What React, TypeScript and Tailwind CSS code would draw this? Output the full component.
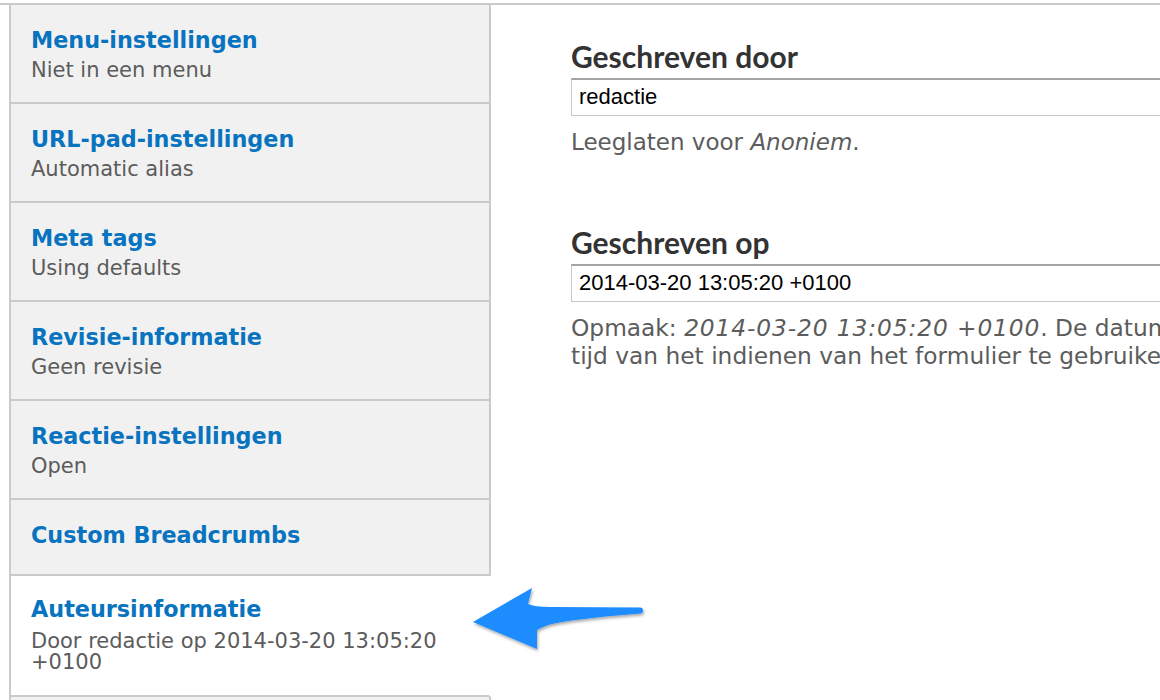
const lucida = "font-['DejaVu_Sans',sans-serif]";

type Tab = { title: string; summary?: string; active?: boolean };

const tabs: Tab[] = [
  { title: "Menu-instellingen", summary: "Niet in een menu" },
  { title: "URL-pad-instellingen", summary: "Automatic alias" },
  { title: "Meta tags", summary: "Using defaults" },
  { title: "Revisie-informatie", summary: "Geen revisie" },
  { title: "Reactie-instellingen", summary: "Open" },
  { title: "Custom Breadcrumbs" },
  { title: "Auteursinformatie", summary: "Door redactie op 2014-03-20 13:05:20 +0100", active: true },
];

function TabItem({ tab }: { tab: Tab }) {
  return (
    <li
      className={
        "border-b-2 border-l-2 border-[#cacaca] px-[20px] " +
        (tab.active
          ? "bg-white pt-[18px] pb-[22px] border-r-2 border-r-white"
          : "bg-[#f1f1f1] pt-[20px] border-r-2 " + (tab.summary ? "h-[99px]" : "h-[76px]"))
      }
    >
      <a className={`${lucida} block text-[22.3px] leading-[30px] font-bold text-[#0873bf]`}>{tab.title}</a>
      {tab.summary && (
        <div
          className={`${lucida} text-[21px] leading-[21px] text-[#5c5c5c] pr-[10px] ${tab.active ? "mt-[7px]" : "mt-[5px]"}`}
        >
          {tab.summary}
        </div>
      )}
    </li>
  );
}

export default function App() {
  return (
    <div className="relative h-[700px] w-[1160px] overflow-hidden bg-white pt-[3px]">
      <div className="flex border-t-2 border-[#cacaca] pl-[9px]">
        {/* verticale tabs */}
        <ul className="w-[482px] shrink-0">
          {tabs.map((t) => (
            <TabItem key={t.title} tab={t} />
          ))}
          <li className="h-[40px] border-l-2 border-r-2 border-[#cacaca] bg-[#f1f1f1]" />
        </ul>

        {/* inhoud */}
        <div className="min-w-0 flex-1 pl-[80px] pt-[34px]">
          <div>
            <label className="block font-['Lato',sans-serif] text-[30px] leading-[34px] font-bold text-[#333]">
              Geschreven door
            </label>
            <div className="mt-[5px] h-[38px] w-[700px] border border-[#c8c8c8] border-t-2 border-t-[#a3a3a3] pl-[7px] font-['Liberation_Sans',sans-serif] text-[22px] leading-[34px] text-black">
              redactie
            </div>
            <p className={`${lucida} mt-[12px] text-[23px] leading-[28px] text-[#5c5c5c]`}>
              Leeglaten voor <em>Anoniem</em>.
            </p>
          </div>

          <div className="mt-[69px]">
            <label className="block font-['Lato',sans-serif] text-[30px] leading-[34px] font-bold text-[#333]">
              Geschreven op
            </label>
            <div className="mt-[5px] h-[38px] w-[700px] border border-[#c8c8c8] border-t-2 border-t-[#a3a3a3] pl-[7px] font-['Liberation_Sans',sans-serif] text-[22px] leading-[34px] text-black">
              2014-03-20 13:05:20 +0100
            </div>
            <p className={`${lucida} mt-[12px] w-[640px] text-[23.3px] leading-[28px] text-[#5c5c5c]`}>
              Opmaak: <em className="tracking-[0.9px]">2014-03-20 13:05:20 +0100</em>. De datum en tijd van het
              indienen van het formulier te gebruiken.
            </p>
          </div>
        </div>
      </div>

      {/* pijl */}
      <svg className="absolute left-[460px] top-[575px]" width="200" height="90" viewBox="0 0 200 90">
        <defs>
          <filter id="sh" x="-10%" y="-20%" width="130%" height="160%">
            <feDropShadow dx="1" dy="2" stdDeviation="1.5" floodColor="#000" floodOpacity="0.35" />
          </filter>
        </defs>
        <path
          d="M13 47 L72 13 L68 29 Q74 32 90 32 L180 32.5 A3 3 0 0 1 180 38.5 Q110 44 88 50 Q80 53 77 55 L77 74 Z"
          fill="#1a8cff"
          filter="url(#sh)"
        />
      </svg>
    </div>
  );
}
